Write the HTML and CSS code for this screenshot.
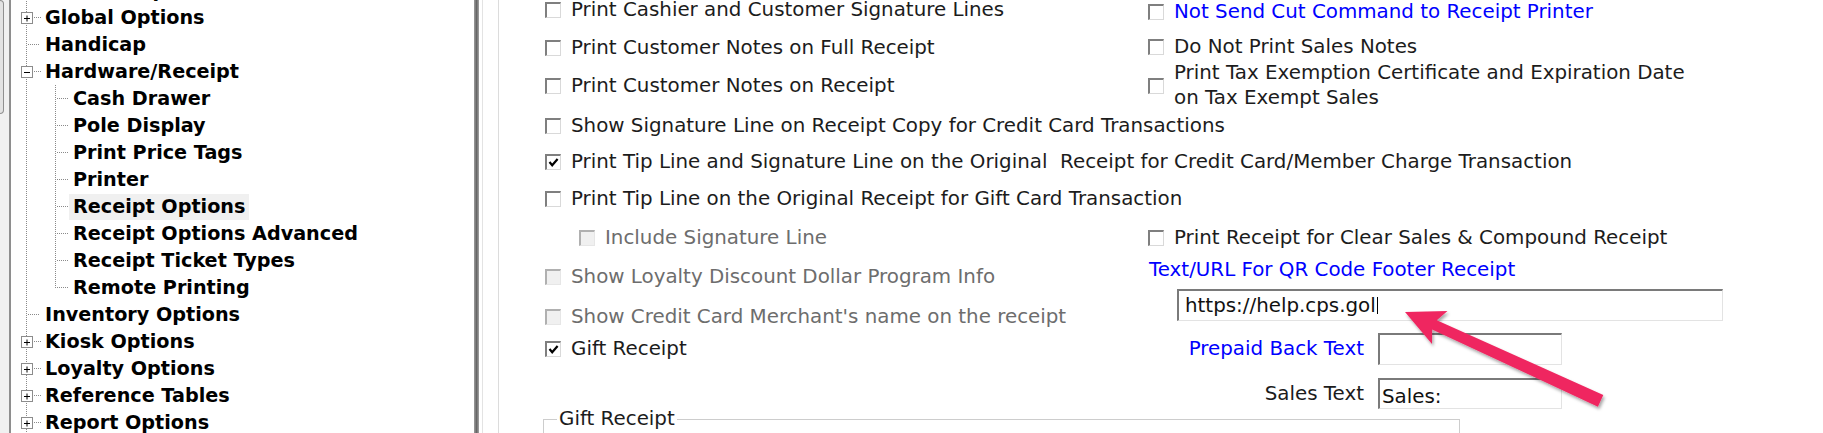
FILE: index.html
```html
<!DOCTYPE html>
<html>
<head>
<meta charset="utf-8">
<title>Receipt Options</title>
<link rel="stylesheet" href="styles.css">
</head>
<body>
<div class="edge"><div class="thumb"></div></div>
<div class="tree">
  <ul class="nodes">
    <li><div class="row"><span class="gut"><svg class="box" width="12" height="12" viewBox="0 0 12 12"><rect x="0.5" y="0.5" width="11" height="11" fill="#fff" stroke="#8c8c8c"/><path d="M3 6.5h6M6 3.5v6" stroke="#000"/></svg><span class="hd"></span></span><span class="lbl">General Options</span></div></li>
    <li><div class="row"><span class="gut"><svg class="box" width="12" height="12" viewBox="0 0 12 12"><rect x="0.5" y="0.5" width="11" height="11" fill="#fff" stroke="#8c8c8c"/><path d="M3 6.5h6M6 3.5v6" stroke="#000"/></svg><span class="hd"></span></span><span class="lbl">Global Options</span></div></li>
    <li><div class="row"><span class="gut leaf"><span class="hd"></span></span><span class="lbl">Handicap</span></div></li>
    <li>
      <div class="row"><span class="gut"><svg class="box" width="12" height="12" viewBox="0 0 12 12"><rect x="0.5" y="0.5" width="11" height="11" fill="#fff" stroke="#8c8c8c"/><path d="M3 6.5h6" stroke="#000"/></svg><span class="hd"></span></span><span class="lbl">Hardware/Receipt</span></div>
      <ul class="kids">
        <li><div class="row"><span class="gut child"><span class="hd"></span></span><span class="lbl">Cash Drawer</span></div></li>
        <li><div class="row"><span class="gut child"><span class="hd"></span></span><span class="lbl">Pole Display</span></div></li>
        <li><div class="row"><span class="gut child"><span class="hd"></span></span><span class="lbl">Print Price Tags</span></div></li>
        <li><div class="row"><span class="gut child"><span class="hd"></span></span><span class="lbl">Printer</span></div></li>
        <li><div class="row"><span class="gut child"><span class="hd"></span></span><span class="lbl sel">Receipt Options</span></div></li>
        <li><div class="row"><span class="gut child"><span class="hd"></span></span><span class="lbl">Receipt Options Advanced</span></div></li>
        <li><div class="row"><span class="gut child"><span class="hd"></span></span><span class="lbl">Receipt Ticket Types</span></div></li>
        <li><div class="row"><span class="gut child"><span class="hd"></span></span><span class="lbl">Remote Printing</span></div></li>
      </ul>
    </li>
    <li><div class="row"><span class="gut leaf"><span class="hd"></span></span><span class="lbl">Inventory Options</span></div></li>
    <li><div class="row"><span class="gut"><svg class="box" width="12" height="12" viewBox="0 0 12 12"><rect x="0.5" y="0.5" width="11" height="11" fill="#fff" stroke="#8c8c8c"/><path d="M3 6.5h6M6 3.5v6" stroke="#000"/></svg><span class="hd"></span></span><span class="lbl">Kiosk Options</span></div></li>
    <li><div class="row"><span class="gut"><svg class="box" width="12" height="12" viewBox="0 0 12 12"><rect x="0.5" y="0.5" width="11" height="11" fill="#fff" stroke="#8c8c8c"/><path d="M3 6.5h6M6 3.5v6" stroke="#000"/></svg><span class="hd"></span></span><span class="lbl">Loyalty Options</span></div></li>
    <li><div class="row"><span class="gut"><svg class="box" width="12" height="12" viewBox="0 0 12 12"><rect x="0.5" y="0.5" width="11" height="11" fill="#fff" stroke="#8c8c8c"/><path d="M3 6.5h6M6 3.5v6" stroke="#000"/></svg><span class="hd"></span></span><span class="lbl">Reference Tables</span></div></li>
    <li><div class="row"><span class="gut"><svg class="box" width="12" height="12" viewBox="0 0 12 12"><rect x="0.5" y="0.5" width="11" height="11" fill="#fff" stroke="#8c8c8c"/><path d="M3 6.5h6M6 3.5v6" stroke="#000"/></svg><span class="hd"></span></span><span class="lbl">Report Options</span></div></li>
  </ul>
</div>
<div class="sash"></div>
<div class="gap"></div>
<div class="panel">
  <div class="secA">
    <div class="colL">
      <div class="opt"><span class="cb"></span>Print Cashier and Customer Signature Lines</div>
      <div class="opt s18"><span class="cb"></span>Print Customer Notes on Full Receipt</div>
      <div class="opt s18"><span class="cb"></span>Print Customer Notes on Receipt</div>
    </div>
    <div class="colR">
      <div class="opt blue r1"><span class="cb"></span>Not Send Cut Command to Receipt Printer</div>
      <div class="opt r2"><span class="cb"></span>Do Not Print Sales Notes</div>
      <div class="opt multi r3"><span class="cb"></span><span>Print Tax Exemption Certificate and Expiration Date<br>on Tax Exempt Sales</span></div>
    </div>
  </div>
  <div class="secB">
    <div class="opt b1"><span class="cb"></span>Show Signature Line on Receipt Copy for Credit Card Transactions</div>
    <div class="opt b2"><span class="cb"><svg width="13" height="13" viewBox="0 0 13 13"><path d="M2.5 6 L5.2 9.2 L10.6 3" fill="none" stroke="#000" stroke-width="2.2"/></svg></span>Print Tip Line and Signature Line on the Original&nbsp; Receipt for Credit Card/Member Charge Transaction</div>
    <div class="opt b3"><span class="cb"></span>Print Tip Line on the Original Receipt for Gift Card Transaction</div>
  </div>
  <div class="secC">
    <div class="colL">
      <div class="opt dis indent"><span class="cb"></span>Include Signature Line</div>
      <div class="opt dis c2"><span class="cb"></span>Show Loyalty Discount Dollar Program Info</div>
      <div class="opt dis c3"><span class="cb"></span>Show Credit Card Merchant's name on the receipt</div>
      <div class="opt c4"><span class="cb"><svg width="13" height="13" viewBox="0 0 13 13"><path d="M2.5 6 L5.2 9.2 L10.6 3" fill="none" stroke="#000" stroke-width="2.2"/></svg></span>Gift Receipt</div>
    </div>
    <div class="colR">
      <div class="opt"><span class="cb"></span>Print Receipt for Clear Sales &amp; Compound Receipt</div>
      <div class="qlabel">Text/URL For QR Code Footer Receipt</div>
      <div class="urlbox">https://help.cps.gol<span class="caret"></span></div>
      <div class="field f1"><span class="flabel blue">Prepaid Back Text</span><span class="fbox"></span></div>
      <div class="field f2"><span class="flabel">Sales Text</span><span class="fbox sales">Sales:</span></div>
    </div>
  </div>
  <fieldset class="gift"><legend>Gift Receipt</legend></fieldset>
</div>
<svg class="arrow" width="1823" height="433" viewBox="0 0 1823 433">
  <defs>
    <filter id="sh" x="-20%" y="-20%" width="140%" height="140%">
      <feDropShadow dx="1.5" dy="2.5" stdDeviation="1.6" flood-color="#000" flood-opacity="0.35"/>
    </filter>
  </defs>
  <polygon filter="url(#sh)" fill="#ef2760" points="1405,312 1447.5,311 1436.8,320.3 1603.3,394.9 1597.9,406.7 1432.1,329.4 1432,344"/>
</svg>
</body>
</html>
```

FILE: styles.css
```css
html, body {
  margin: 0;
  padding: 0;
}
body {
  width: 1823px;
  height: 433px;
  overflow: hidden;
  display: flex;
  position: relative;
  background: #ffffff;
  font-family: "DejaVu Sans", Verdana, sans-serif;
}

/* left strip with scroll thumb remnant */
.edge {
  width: 9px;
  flex: none;
  background: #f0f0f0;
}
.thumb {
  width: 3px;
  height: 112px;
  background: #e2e2e2;
  border: 1px solid #8f8f8f;
  border-left: 0;
  border-radius: 0 5px 5px 0;
}

/* tree */
.tree {
  width: 463px;
  height: 433px;
  flex: none;
  border-left: 2px solid #8e8e8e;
  overflow: hidden;
  background: #fff;
}
.nodes, .kids {
  list-style: none;
  margin: 0;
  padding: 0;
}
.nodes {
  margin-top: -23px;
  padding-bottom: 30px;
  background-image: repeating-linear-gradient(to bottom, #8a8a8a 0 1px, transparent 1px 2px);
  background-size: 1px 100%;
  background-position: 15px 0;
  background-repeat: no-repeat;
}
.kids {
  background-image: repeating-linear-gradient(to bottom, #8a8a8a 0 1px, transparent 1px 2px);
  background-size: 1px calc(100% - 13px);
  background-position: 44px 0;
  background-repeat: no-repeat;
}
.row {
  display: flex;
  align-items: center;
  height: 27px;
}
.gut {
  width: 30px;
  flex: none;
  display: flex;
  align-items: center;
  padding-left: 10px;
  box-sizing: border-box;
}
.gut.leaf {
  padding-left: 17px;
}
.gut.child {
  width: 58px;
  padding-left: 46px;
}
.box {
  display: block;
  flex: none;
  margin-top: 1px;
}
.hd {
  display: block;
  height: 1px;
  width: 7px;
  margin-left: 1px;
  background-image: repeating-linear-gradient(to right, #8a8a8a 0 1px, transparent 1px 2px);
}
.gut.leaf .hd {
  width: 12px;
  margin-left: 0;
}
.gut.child .hd {
  width: 11px;
  margin-left: 0;
}
.lbl {
  font-weight: bold;
  font-size: 19.2px;
  line-height: 26px;
  color: #000;
  padding: 0 4px;
  white-space: nowrap;
}
.lbl.sel {
  background: #f0f0f0;
}

/* splitter */
.sash {
  width: 5px;
  flex: none;
  background: linear-gradient(to right, #9a9a9a 0, #8a8a8a 20%, #666 50%, #8a8a8a 80%, #a5a5a5 100%);
}
.gap {
  width: 15px;
  flex: none;
  margin-left: 3px;
  border-left: 1px solid #e3e3e3;
}

/* options panel */
.panel {
  flex: 1;
  border-left: 1px solid #dcdcdc;
  padding-left: 46px;
  font-size: 19.85px;
  color: #1c1c1c;
}
.secA, .secC {
  display: flex;
}
.colL {
  width: 603px;
  flex: none;
}
.colR {
  flex: none;
}
.opt {
  display: flex;
  align-items: center;
  height: 20px;
  line-height: 20px;
  white-space: nowrap;
}
.cb {
  width: 13px;
  height: 13px;
  flex: none;
  border-style: solid;
  border-width: 2px 1px 1px 2px;
  border-color: #7f7f7f #d9d9d9 #d9d9d9 #7f7f7f;
  background: #fff;
  margin-right: 10px;
}
.cb svg {
  display: block;
}
.opt.dis {
  color: #6d6d6d;
}
.opt.dis .cb {
  background: #f0f0f0;
  border-color: #b0b0b0 #e6e6e6 #e6e6e6 #b0b0b0;
}
.blue {
  color: #0000ff;
}
.s18 { margin-top: 18px; }
.r1 { margin-top: 2px; }
.r2 { margin-top: 15px; }
.r3 { margin-top: 4px; }
.opt.multi {
  height: auto;
  line-height: 24.5px;
}
.secB {
  display: flex;
  flex-direction: column;
  margin-top: 6px;
}
.b2 { margin-top: 16px; }
.b3 { margin-top: 17px; }
.secC {
  margin-top: 19px;
}
.indent { padding-left: 34px; }
.c2 { margin-top: 19px; }
.c3 { margin-top: 20px; }
.c4 { margin-top: 12px; }

.qlabel {
  margin-top: 12px;
  height: 20px;
  line-height: 20px;
  padding-left: 1px;
  color: #0000ff;
  white-space: nowrap;
}
.urlbox {
  margin-top: 9px;
  margin-left: 29px;
  width: 546px;
  height: 32px;
  box-sizing: border-box;
  border-style: solid;
  border-width: 2px 1px 1px 2px;
  border-color: #7a7a7a #e3e3e3 #e3e3e3 #7a7a7a;
  padding-left: 6px;
  display: flex;
  align-items: center;
  color: #111;
  background: #fff;
}
.caret {
  width: 1px;
  height: 17px;
  background: #000;
  margin-left: 1px;
}
.field {
  display: flex;
  align-items: center;
}
.f1 { margin-top: 12px; }
.f2 { margin-top: 13px; }
.flabel {
  width: 216px;
  text-align: right;
  margin-right: 14px;
  white-space: nowrap;
}
.fbox {
  width: 184px;
  height: 31.5px;
  box-sizing: border-box;
  border-style: solid;
  border-width: 2px 1px 1px 2px;
  border-color: #7a7a7a #e3e3e3 #e3e3e3 #7a7a7a;
  padding-left: 2px;
  background: #fff;
  color: #111;
  line-height: 28px;
}
.fbox.sales {
  padding-top: 3px;
}
.gift {
  margin: -1px 0 0 -2px;
  width: 917px;
  height: 60px;
  box-sizing: border-box;
  border: 1px solid #cdcdcd;
  padding: 0 0 0 13px;
}
.gift legend {
  padding: 0 2px;
  line-height: 22px;
  color: #1c1c1c;
}

/* annotation arrow */
.arrow {
  position: absolute;
  left: 0;
  top: 0;
  pointer-events: none;
}
```
